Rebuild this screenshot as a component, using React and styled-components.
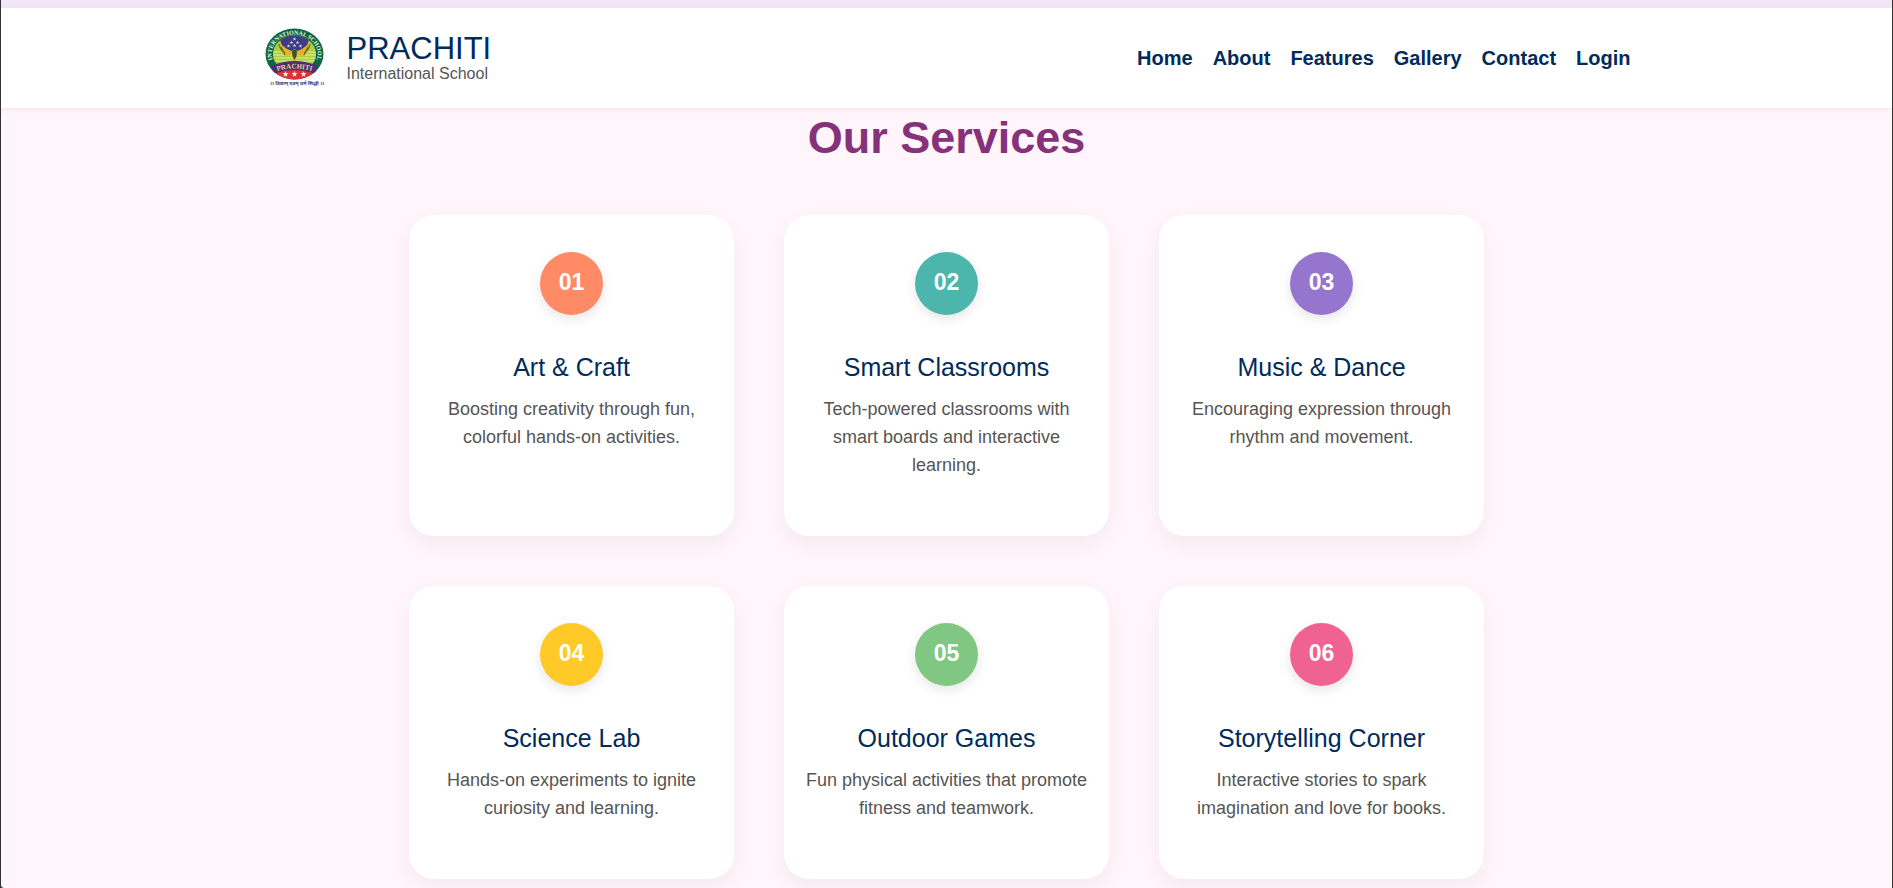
import React from "react";
import styled, { createGlobalStyle } from "styled-components";

const GlobalStyle = createGlobalStyle`
  * { box-sizing: border-box; }
  body {
    margin: 0;
    background: #333;
    font-family: "Liberation Sans", Arial, sans-serif;
  }
`;

const Page = styled.div`
  min-height: 100vh;
  background: #fff5fb;
  border: solid #333;
  border-width: 0 1px;
  border-bottom-left-radius: 4px;
`;

const TopStrip = styled.div`
  height: 8px;
  background: #f3e5f8;
`;

const Header = styled.header`
  position: relative;
  background: #fff;
  box-shadow: 0 2px 5px rgba(0, 0, 0, 0.06);
`;

const HeaderInner = styled.div`
  max-width: 1400px;
  min-height: 100px;
  margin: 0 auto;
  padding: 0 16px;
  display: flex;
  align-items: center;
  justify-content: space-between;
`;

const Brand = styled.a`
  display: flex;
  align-items: center;
  gap: 20px;
  text-decoration: none;
`;

const LogoSvg = styled.svg`
  display: block;
  width: 64px;
  height: 60px;
`;

const BrandText = styled.span`
  display: flex;
  flex-direction: column;
`;

const BrandName = styled.span`
  font-size: 31px;
  line-height: 32px;
  color: #002b5b;
`;

const BrandTag = styled.span`
  font-size: 16px;
  line-height: 18px;
  color: #555;
`;

const Nav = styled.nav`
  display: flex;
  gap: 20px;
`;

const NavLink = styled.a`
  font-size: 20px;
  line-height: 24px;
  font-weight: 700;
  color: #002b5b;
  text-decoration: none;
`;

const Services = styled.main`
  padding: 0 20px 8px;
`;

const Heading = styled.h1`
  margin: 0 0 48px;
  font-size: 45px;
  line-height: 59px;
  font-weight: 700;
  text-align: center;
  color: #86327a;
`;

const Grid = styled.div`
  display: grid;
  grid-template-columns: repeat(auto-fit, minmax(300px, 1fr));
  gap: 50px;
  max-width: 1075px;
  margin: 0 auto;
`;

const Card = styled.article`
  display: flex;
  flex-direction: column;
  align-items: center;
  padding: 37px 20px;
  border-radius: 25px;
  background: #fff;
  box-shadow: 0 8px 25px rgba(0, 0, 0, 0.05);
  text-align: center;
`;

const Badge = styled.span`
  display: flex;
  align-items: center;
  justify-content: center;
  width: 63px;
  height: 63px;
  padding-bottom: 2px;
  border-radius: 50%;
  background: ${(p) => p.$color};
  box-shadow: 0 4px 12px rgba(0, 0, 0, 0.1);
  font-size: 23px;
  font-weight: 700;
  color: #fff;
`;

const CardTitle = styled.h2`
  margin: 37px 0 13px;
  font-size: 25px;
  line-height: 30px;
  font-weight: 400;
  color: #002b5b;
`;

const CardText = styled.p`
  margin: 0 0 20px;
  font-size: 18px;
  line-height: 28px;
  color: #555;
`;

const links = ["Home", "About", "Features", "Gallery", "Contact", "Login"];

const services = [
  { n: "01", color: "#ff8a65", title: "Art & Craft", text: "Boosting creativity through fun, colorful hands-on activities." },
  { n: "02", color: "#4db6ac", title: "Smart Classrooms", text: "Tech-powered classrooms with smart boards and interactive learning." },
  { n: "03", color: "#9575cd", title: "Music & Dance", text: "Encouraging expression through rhythm and movement." },
  { n: "04", color: "#ffca28", title: "Science Lab", text: "Hands-on experiments to ignite curiosity and learning." },
  { n: "05", color: "#81c784", title: "Outdoor Games", text: "Fun physical activities that promote fitness and teamwork." },
  { n: "06", color: "#f06292", title: "Storytelling Corner", text: "Interactive stories to spark imagination and love for books." },
];

const star = "M0 -2.6L0.7 -0.8L2.6 -0.8L1.1 0.4L1.6 2.3L0 1.2L-1.6 2.3L-1.1 0.4L-2.6 -0.8L-0.7 -0.8Z";

function Logo() {
  return (
    <LogoSvg viewBox="0 1 64 60" role="img" aria-label="Prachiti International School emblem">
      <defs>
        <clipPath id="field"><ellipse cx="31.5" cy="27" rx="21.5" ry="18.5" /></clipPath>
        <clipPath id="outer"><ellipse cx="31.5" cy="27" rx="29" ry="25.5" /></clipPath>
        <path id="ring" d="M12.500 38A23 19.5 0 1 1 50.500 38" />
        <path id="ribbon" d="M13 44.500Q31.5 38.500 50 44.500" />
      </defs>
      <ellipse cx="31.5" cy="27" rx="29" ry="25.5" fill="#0c6843" />
      <g clipPath="url(#field)">
        <rect x="9" y="7" width="45" height="40" fill="#a9cf4a" />
        <path d="M15 8H48L43 21L35 24H28L20 21Z" fill="#3e3c84" />
        <path d="M9 25H54M9 28H54M9 31H54M9 34H54" stroke="#e7ef8c" strokeWidth="1" />
      </g>
      <path d="M16 16Q15 25 23 29L29 28L30 35H33L34 28L40 29Q48 25 47 16L39 22L34.500 24L31.500 22L28.500 24L24 22Z" fill="#e3b526" />
      <path d="M16 17Q17 23 22 26M47 17Q46 23 41 26M18 20L22 28M45 20L41 28" fill="none" stroke="#596522" strokeWidth="1.1" />
      <path d="M29 24Q31.5 21 34 24L33.500 29L31.5 33L29.500 29Z" fill="#30582e" />
      <g fill="#dfe2f4">
        {[[31.5, 12], [28.5, 15.5], [34.5, 15.5], [25.5, 19], [31.5, 18.5], [37.5, 19]].map(([x, y]) => (
          <path key={x + "-" + y} d={star} transform={`translate(${x} ${y}) scale(.7)`} />
        ))}
      </g>
      <g clipPath="url(#outer)">
        <path d="M7 44Q31.5 38 56 44V54H7Z" fill="#df3038" />
        <path d="M8 39Q31.5 29 55 39L52 47Q31.5 39 11 47Z" fill="#493078" />
      </g>
      <g fill="#fff8dc">
        {[22.5, 31.5, 40.5].map((x) => (
          <path key={x} d={star} transform={`translate(${x} 47) scale(1.15)`} />
        ))}
      </g>
      <text fontFamily="Liberation Serif, serif" fontSize="6" fontWeight="700" fill="#e8f4e6" textAnchor="middle">
        <textPath href="#ring" startOffset="50%">INTERNATIONAL SCHOOL</textPath>
      </text>
      <text fontFamily="Liberation Serif, serif" fontSize="7" fontWeight="700" fill="#f1d28e" textAnchor="middle">
        <textPath href="#ribbon" startOffset="50%">PRACHITI</textPath>
      </text>
      <text x="34" y="58" fontFamily="Noto Sans, sans-serif" fontSize="5" fontWeight="700" fill="#3c3c66" textAnchor="middle">
        ।। विद्याम् एवम् धर्म सिद्धी ।।
      </text>
    </LogoSvg>
  );
}

export default function App() {
  return (
    <>
      <GlobalStyle />
      <Page>
        <TopStrip />
        <Header>
          <HeaderInner>
            <Brand href="#home">
              <Logo />
              <BrandText>
                <BrandName>PRACHITI</BrandName>
                <BrandTag>International School</BrandTag>
              </BrandText>
            </Brand>
            <Nav>
              {links.map((l) => (
                <NavLink key={l} href={"#" + l.toLowerCase()}>{l}</NavLink>
              ))}
            </Nav>
          </HeaderInner>
        </Header>
        <Services>
          <Heading>Our Services</Heading>
          <Grid>
            {services.map((s) => (
              <Card key={s.n}>
                <Badge $color={s.color}>{s.n}</Badge>
                <CardTitle>{s.title}</CardTitle>
                <CardText>{s.text}</CardText>
              </Card>
            ))}
          </Grid>
        </Services>
      </Page>
    </>
  );
}
